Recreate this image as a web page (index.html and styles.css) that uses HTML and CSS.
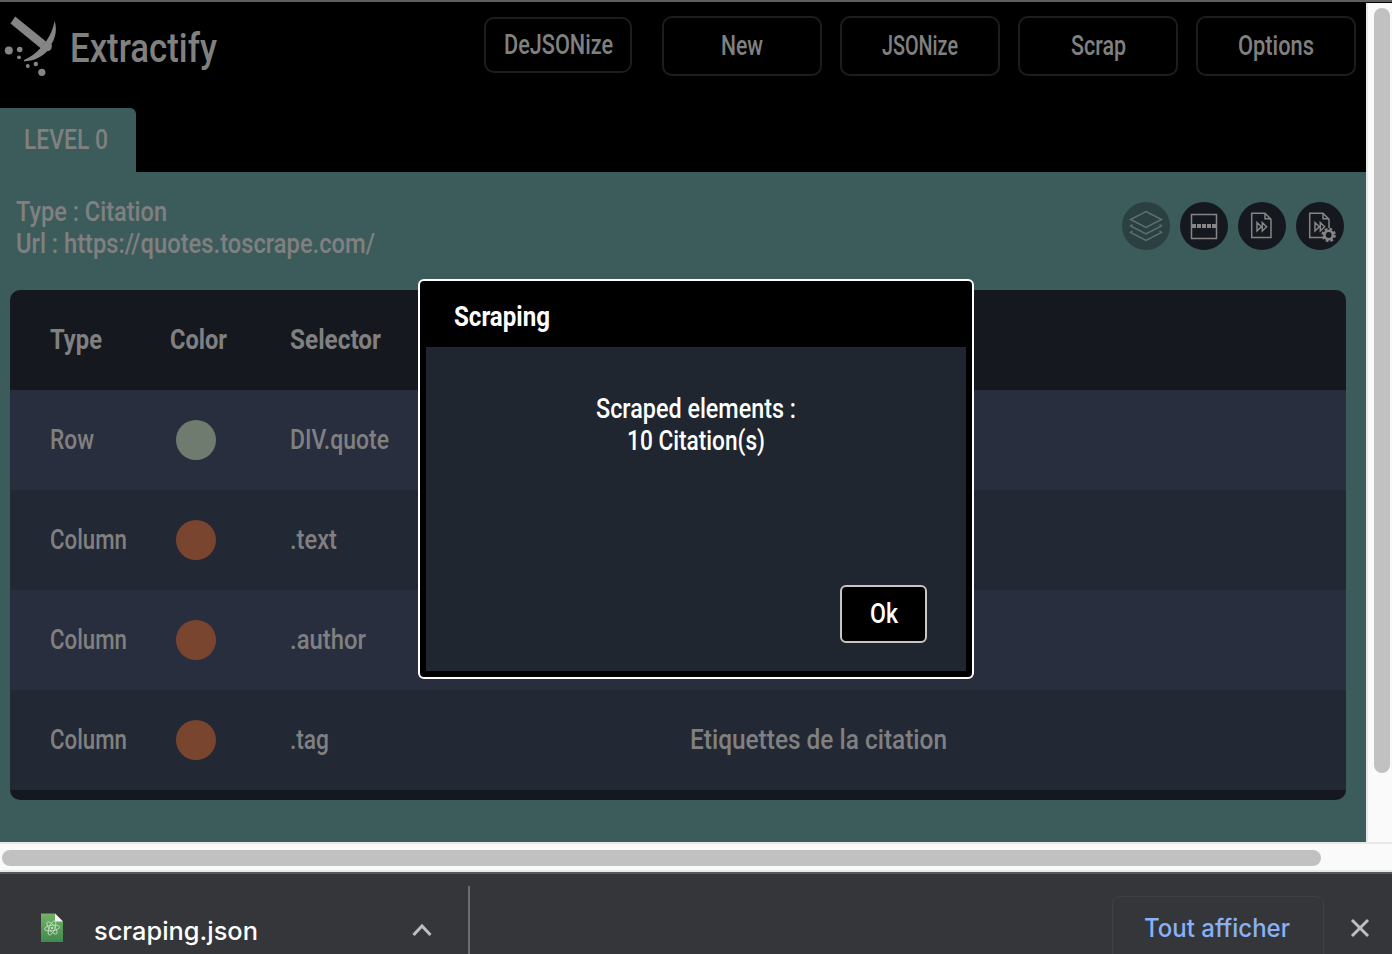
FILE: index.html
```html
<!DOCTYPE html>
<html lang="en">
<head>
<meta charset="utf-8">
<title>Extractify</title>
<link rel="stylesheet" href="styles.css">
</head>
<body>
<div class="window">
  <div class="viewport">
    <main class="page">
      <header class="topbar">
        <svg class="logo" width="56" height="64" viewBox="0 0 56 64">
          <path d="M15.200 4.500L46 29.500L41 36.500L10.500 11.500Z"/>
          <path d="M54.700 9C57 17 56 25 51.500 32C52.500 35 51 39.500 47.500 39C41 45.500 33 49.500 24 49.300V48C31 45 36 41 40 36.500L46 29.500C50 24 53 17 54.700 9Z"/>
          <circle cx="8.800" cy="38.500" r="4"/><circle cx="19.700" cy="37.500" r="2.800"/>
          <circle cx="19" cy="45.300" r="1.900"/><circle cx="27.800" cy="54" r="1.900"/>
          <circle cx="35.800" cy="52" r="2.200"/><circle cx="41.800" cy="60.300" r="3.600"/>
        </svg>
        <svg class="label brand" width="147" height="48"><text y="38" textLength="147" lengthAdjust="spacingAndGlyphs">Extractify</text></svg>
        <nav class="actions">
          <div class="btn btn-small"><svg class="label" width="109" height="32"><text y="25" textLength="109" lengthAdjust="spacingAndGlyphs">DeJSONize</text></svg></div>
          <div class="btn"><svg class="label medium" width="42" height="32"><text y="24.500" textLength="42" lengthAdjust="spacingAndGlyphs">New</text></svg></div>
          <div class="btn"><svg class="label medium" width="76" height="32"><text y="24.500" textLength="76" lengthAdjust="spacingAndGlyphs">JSONize</text></svg></div>
          <div class="btn"><svg class="label medium" width="55" height="32"><text y="24.500" textLength="55" lengthAdjust="spacingAndGlyphs">Scrap</text></svg></div>
          <div class="btn"><svg class="label medium" width="76" height="32"><text y="24.500" textLength="76" lengthAdjust="spacingAndGlyphs">Options</text></svg></div>
        </nav>
      </header>
      <div class="tabs">
        <div class="tab"><svg class="label" width="84" height="32"><text y="25" textLength="84" lengthAdjust="spacingAndGlyphs">LEVEL 0</text></svg></div>
      </div>
      <section class="panel">
        <div class="panel-head">
          <div class="meta">
            <svg class="label" width="151" height="32"><text y="25" textLength="151" lengthAdjust="spacingAndGlyphs">Type : Citation</text></svg>
            <svg class="label" width="359" height="32"><text y="25" textLength="359" lengthAdjust="spacingAndGlyphs">Url : https://quotes.toscrape.com/</text></svg>
          </div>
          <div class="tools">
            <svg class="tool tool-off" viewBox="0 0 48 48">
              <path d="M24 9.500L39.500 17.500L24 25.500L8.500 17.500Z"/>
              <path d="M10.500 22.500L8.500 24L24 32L39.500 24L37.500 22.500"/>
              <path d="M10.500 29L8.500 30.500L24 38.500L39.500 30.500L37.500 29"/>
            </svg>
            <svg class="tool" viewBox="0 0 48 48">
              <rect x="11.500" y="12.500" width="25" height="24"/>
              <path class="dash" d="M12 24H36"/>
            </svg>
            <svg class="tool" viewBox="0 0 48 48">
              <path d="M13.700 11.300H27L33 17.300V35.500H13.700Z"/><path d="M27 11.300V16.700H33"/>
              <path d="M19 20.500V29L23.300 24.700ZM24.300 20.500V29L28.600 24.700Z"/>
            </svg>
            <svg class="tool" viewBox="0 0 48 48">
              <path d="M27 35.500H13.700V11.300H27L33 17.300V26"/><path d="M27 11.300V16.700H33"/>
              <path d="M19 20.500V29L23.300 24.700ZM24.300 20.500V29L28.600 24.700Z"/>
              <circle class="gear-gap" cx="32.700" cy="33" r="6.500"/>
              <circle class="gear-teeth" cx="32.700" cy="33" r="5.800"/>
              <circle class="gear-ring" cx="32.700" cy="33" r="4.200"/>
            </svg>
          </div>
        </div>
        <div class="table">
          <div class="row row-head">
            <div class="cell"><svg class="label bold" width="52" height="32"><text y="25" textLength="52" lengthAdjust="spacingAndGlyphs">Type</text></svg></div>
            <div class="cell"><svg class="label bold" width="57" height="32"><text y="25" textLength="57" lengthAdjust="spacingAndGlyphs">Color</text></svg></div>
            <div class="cell"><svg class="label bold" width="91" height="32"><text y="25" textLength="91" lengthAdjust="spacingAndGlyphs">Selector</text></svg></div>
            <div class="cell"></div>
          </div>
          <div class="row row-light">
            <div class="cell"><svg class="label" width="44" height="32"><text y="25" textLength="44" lengthAdjust="spacingAndGlyphs">Row</text></svg></div>
            <div class="cell"><span class="dot dot-sage"></span></div>
            <div class="cell"><svg class="label" width="99" height="32"><text y="25" textLength="99" lengthAdjust="spacingAndGlyphs">DIV.quote</text></svg></div>
            <div class="cell"></div>
          </div>
          <div class="row row-deep">
            <div class="cell"><svg class="label" width="77" height="32"><text y="25" textLength="77" lengthAdjust="spacingAndGlyphs">Column</text></svg></div>
            <div class="cell"><span class="dot"></span></div>
            <div class="cell"><svg class="label" width="47" height="32"><text y="25" textLength="47" lengthAdjust="spacingAndGlyphs">.text</text></svg></div>
            <div class="cell"></div>
          </div>
          <div class="row row-light">
            <div class="cell"><svg class="label" width="77" height="32"><text y="25" textLength="77" lengthAdjust="spacingAndGlyphs">Column</text></svg></div>
            <div class="cell"><span class="dot"></span></div>
            <div class="cell"><svg class="label" width="76" height="32"><text y="25" textLength="76" lengthAdjust="spacingAndGlyphs">.author</text></svg></div>
            <div class="cell"></div>
          </div>
          <div class="row row-deep">
            <div class="cell"><svg class="label" width="77" height="32"><text y="25" textLength="77" lengthAdjust="spacingAndGlyphs">Column</text></svg></div>
            <div class="cell"><span class="dot"></span></div>
            <div class="cell"><svg class="label" width="39" height="32"><text y="25" textLength="39" lengthAdjust="spacingAndGlyphs">.tag</text></svg></div>
            <div class="cell"><svg class="label" width="257" height="32"><text y="25" textLength="257" lengthAdjust="spacingAndGlyphs">Etiquettes de la citation</text></svg></div>
          </div>
        </div>
      </section>
    </main>
    <div class="track-v"><div class="thumb-v"></div></div>
  </div>
  <div class="track-h"><div class="thumb-h"></div></div>
  <footer class="downloads">
    <div class="download">
      <svg class="file" width="24" height="30" viewBox="0 0 24 30">
        <defs><linearGradient id="leaf" x1="0" y1="0" x2="0" y2="1"><stop offset="0" stop-color="#75b267"/><stop offset="1" stop-color="#41894f"/></linearGradient></defs>
        <path fill="url(#leaf)" d="M1 .500H15L23 8.500V29H1Z"/>
        <path fill="#f4f4f4" d="M15 .500L23 8.500H15Z"/>
        <g fill="none" stroke="#c5e3c5" stroke-width=".8">
          <ellipse cx="12" cy="15" rx="7.500" ry="2.800" transform="rotate(-8 12 15)"/>
          <ellipse cx="12" cy="15" rx="7.500" ry="2.800" transform="rotate(52 12 15)"/>
          <ellipse cx="12" cy="15" rx="7.500" ry="2.800" transform="rotate(112 12 15)"/>
        </g>
        <circle cx="12" cy="15" r="1" fill="#e5f3e5"/>
      </svg>
      <svg class="label ui filename" width="164" height="32"><text y="25" textLength="164" lengthAdjust="spacingAndGlyphs">scraping.json</text></svg>
      <svg class="stroke-icon chevron" width="20" height="16" viewBox="0 0 20 16"><path d="M1.500 13L10 4L18.500 13"/></svg>
    </div>
    <div class="show-all"><svg class="label ui link" width="146" height="32"><text y="25.500" textLength="146" lengthAdjust="spacingAndGlyphs">Tout afficher</text></svg></div>
    <svg class="stroke-icon close" width="20" height="20" viewBox="0 0 20 20"><path d="M2 2L18 18M18 2L2 18"/></svg>
  </footer>
  <div class="dialog" role="dialog">
    <div class="dialog-title"><svg class="label bold" width="96" height="32"><text y="25" textLength="96" lengthAdjust="spacingAndGlyphs">Scraping</text></svg></div>
    <div class="dialog-body">
      <svg class="label" width="200" height="32"><text y="25" textLength="200" lengthAdjust="spacingAndGlyphs">Scraped elements :</text></svg>
      <svg class="label" width="138" height="32"><text y="25" textLength="138" lengthAdjust="spacingAndGlyphs">10 Citation(s)</text></svg>
      <div class="ok"><svg class="label" width="28" height="32"><text y="25" textLength="28" lengthAdjust="spacingAndGlyphs">Ok</text></svg></div>
    </div>
  </div>
</div>
</body>
</html>
```

FILE: styles.css
```css
* { box-sizing: border-box; }
body { margin: 0; background: #35363a; }
.window {
  position: relative;
  display: flex;
  flex-direction: column;
  width: 1392px;
  height: 954px;
  overflow: hidden;
  border-top: 2px solid #5f5f60;
  color: #808080;
  font-family: Roboto, "Open Sans", sans-serif;
}
.label {
  display: block;
  flex: none;
  overflow: visible;
  fill: currentColor;
  font-size: 28px;
  font-weight: 500;
}
.label.medium { font-size: 27px; }
.label.bold { font-weight: 700; }
.label.brand { font-size: 40px; }
.label.ui { font-family: Inter, Roboto, sans-serif; font-size: 25px; }

.viewport { display: flex; height: 840px; background: #000; }
.page { display: flex; flex-direction: column; width: 1366px; background: #000; }
.topbar { display: flex; height: 106px; padding: 0 10px 0 0; }
.logo { margin-top: 10px; fill: #858585; }
.brand { margin: 22px 0 0 14px; }
.actions { display: flex; gap: 18px; margin: 14px 0 0 auto; }
.btn {
  display: flex;
  align-items: center;
  justify-content: center;
  width: 160px;
  height: 60px;
  border: 2px solid #1d1d1d;
  border-radius: 10px;
}
.btn-small { width: 148px; height: 56px; margin: 1px 12px 0 0; }
.tabs { display: flex; height: 64px; }
.tab {
  display: flex;
  align-items: center;
  width: 136px;
  padding-left: 24px;
  border-radius: 0 6px 0 0;
  background: #3c5c5c;
}
.panel { flex: 1; padding: 24px 20px 0 10px; background: #3c5c5c; }
.panel-head { display: flex; justify-content: space-between; height: 94px; padding: 0 2px 0 6px; }
.tools { display: flex; gap: 10px; margin-top: 6px; }
.tool {
  width: 48px;
  height: 48px;
  border-radius: 50%;
  background: #15181f;
  fill: none;
  stroke: #858585;
  stroke-width: 1.500;
}
.tool-off { background: #2b4041; stroke: #5d7070; }
.dash { stroke-width: 4; stroke-dasharray: 4 1; }
.gear-gap { fill: #15181f; stroke: none; }
.gear-teeth { stroke-width: 2.800; stroke-dasharray: 2.600 1.955; }
.gear-ring { stroke-width: 2.600; }

.table {
  height: 510px;
  overflow: hidden;
  border-radius: 10px;
  background: #15181f;
}
.row {
  display: grid;
  grid-template-columns: 120px 120px 400px 1fr;
  align-items: center;
  height: 100px;
  padding-left: 40px;
}
.row-light { background: #292e3f; }
.row-deep { background: #232835; }
.dot { display: block; width: 40px; height: 40px; margin-left: 6px; border-radius: 50%; background: #7a452f; }
.dot-sage { background: #707b70; }

.track-v { width: 26px; margin-top: 1px; padding: 5px 2px 0 6px; border-left: 2px solid #e8e8e8; background: #fafafa; }
.thumb-v { height: 765px; border-radius: 8px; background: #c1c1c1; }
.track-h {
  height: 30px;
  padding: 6px 0 0 2px;
  border-top: 2px solid #e8e8e8;
  border-bottom: 2px solid #e8e8e8;
  background: #fafafa;
}
.thumb-h { width: 1319px; height: 16px; border-radius: 8px; background: #c1c1c1; }

.downloads { display: flex; height: 82px; border-top: 2px solid #56575a; background: #35363a; }
.download { display: flex; width: 470px; height: 68px; margin-top: 12px; padding-left: 40px; border-right: 2px solid #6c6d70; }
.file { margin-top: 27px; }
.filename { margin: 29px 0 0 30px; color: #fff; }
.stroke-icon { flex: none; fill: none; stroke: #bdbec0; stroke-width: 3; }
.chevron { margin: 36px 0 0 154px; }
.show-all {
  width: 212px;
  height: 80px;
  margin: 22px 0 0 642px;
  padding: 14px 0 0 31px;
  border: 1px solid #3f4044;
  border-radius: 8px;
}
.link { color: #8ab0f5; }
.close { margin: 44px 0 0 26px; }

.dialog {
  position: absolute;
  top: 277px;
  left: 418px;
  display: flex;
  flex-direction: column;
  width: 556px;
  height: 400px;
  padding: 0 6px 6px;
  border: 2px solid #fff;
  border-radius: 6px;
  background: #000;
  color: #fff;
}
.dialog-title { height: 66px; padding: 20px 0 0 28px; }
.dialog-body {
  display: flex;
  flex: 1;
  flex-direction: column;
  align-items: center;
  padding: 46px 39px 28px;
  background: #20262f;
}
.ok {
  display: flex;
  align-items: center;
  justify-content: center;
  align-self: flex-end;
  width: 87px;
  height: 58px;
  margin-top: auto;
  border: 2px solid #c8c5c3;
  border-radius: 6px;
  background: #000;
}
```
